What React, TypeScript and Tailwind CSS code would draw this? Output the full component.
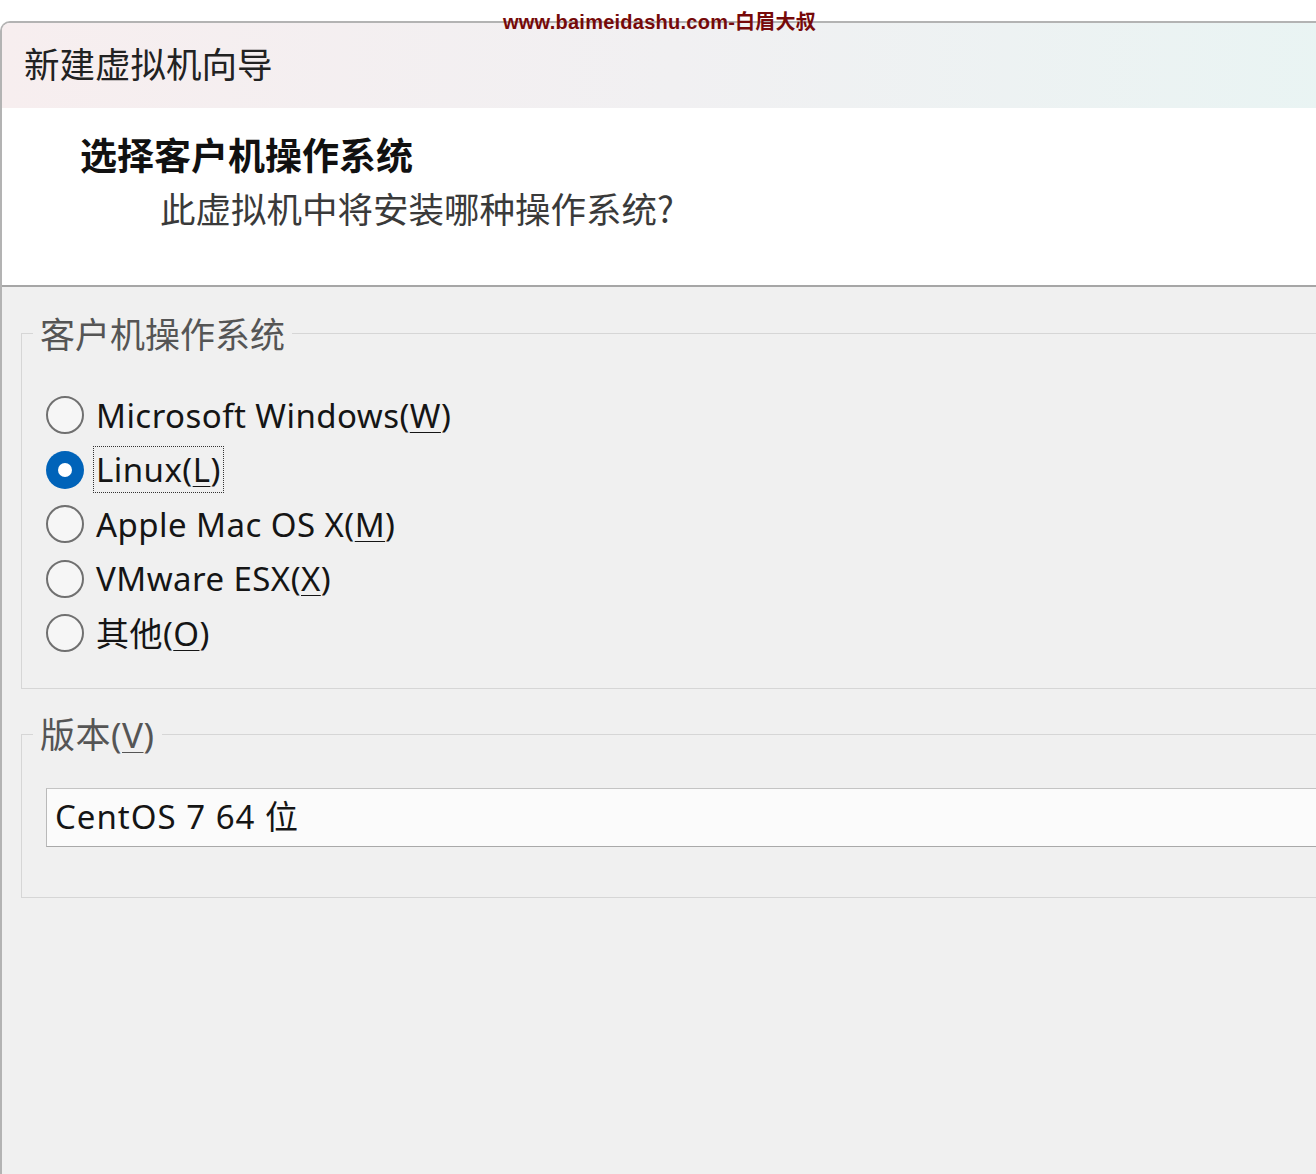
import React from "react";

type Opt = { pre: string; key: string; post: string; selected?: boolean };

const options: Opt[] = [
  { pre: "Microsoft Windows(", key: "W", post: ")" },
  { pre: "Linux(", key: "L", post: ")", selected: true },
  { pre: "Apple Mac OS X(", key: "M", post: ")" },
  { pre: "VMware ESX(", key: "X", post: ")" },
  { pre: "其他(", key: "O", post: ")" },
];

function Radio({ selected }: { selected?: boolean }) {
  if (selected) {
    return (
      <span className="flex h-[38px] w-[38px] shrink-0 items-center justify-center rounded-full bg-[#0063b9]">
        <span className="h-[14px] w-[14px] rounded-full bg-white" />
      </span>
    );
  }
  return (
    <span className="h-[38px] w-[38px] shrink-0 rounded-full border-2 border-[#707070] bg-[#f6f6f6]" />
  );
}

export default function App() {
  return (
    <div className="relative h-[1174px] w-[1316px] overflow-hidden bg-white font-['Noto_Sans','Noto_Sans_CJK_SC',sans-serif]">
      <div className="absolute left-[503px] top-[9px] z-10 whitespace-nowrap font-['Liberation_Sans','Noto_Sans_CJK_SC',sans-serif] text-[20px] font-bold leading-[26px] tracking-[0.25px] text-[#760909]">
        www.baimeidashu.com-白眉大叔
      </div>
      <div className="h-full pt-[21px]">
        <div className="flex h-full w-[1340px] flex-col overflow-hidden rounded-tl-[10px] border-l-2 border-t-2 border-[#b3b3b3]">
          <div className="flex h-[85px] shrink-0 items-center bg-gradient-to-r from-[#f7eeef] via-[#f1f0f2] to-[#e9f4f3] pb-[6px] pl-[22px] font-['Noto_Sans_CJK_SC',sans-serif] text-[35.5px] leading-none text-[#222]">
            新建虚拟机向导
          </div>
          <div className="h-[179px] shrink-0 border-b-2 border-[#a6a6a6] bg-white pt-[28px] font-['Noto_Sans_CJK_SC',sans-serif]">
            <div className="pl-[78px] text-[37px] font-bold leading-none text-[#111]">
              选择客户机操作系统
            </div>
            <div className="mt-[17px] pl-[158px] text-[35.5px] leading-none text-[#3a3a3a]">
              此虚拟机中将安装哪种操作系统?
            </div>
          </div>
          <div className="flex-1 bg-[#f0f0f0] pl-[19px]">
            <fieldset className="mt-[26px] border border-[#d6d6d6]">
              <legend className="ml-[11px] px-[7px] font-['Noto_Sans_CJK_SC',sans-serif] text-[35px] leading-[40px] text-[#555]">
                客户机操作系统
              </legend>
              <div className="flex flex-col pb-[27px] pl-[24px] pt-[35px]">
                {options.map((o) => (
                  <div key={o.key} className="flex h-[54.5px] items-center">
                    <Radio selected={o.selected} />
                    <span
                      className={
                        "ml-[9px] whitespace-nowrap border px-[2px] text-[33px] leading-[45px] tracking-[0.45px] text-[#151515] " +
                        (o.selected ? "border-dotted border-[#333]" : "border-transparent")
                      }
                    >
                      {o.pre}
                      <span className="underline decoration-1 underline-offset-[4px]">{o.key}</span>
                      {o.post}
                    </span>
                  </div>
                ))}
              </div>
            </fieldset>
            <fieldset className="mt-[26px] border border-[#d6d6d6]">
              <legend className="ml-[11px] px-[7px] text-[35px] leading-[40px] tracking-[0.5px] text-[#555]">
                版本(<span className="underline decoration-1 underline-offset-[4px]">V</span>)
              </legend>
              <div className="pb-[50px] pl-[24px] pt-[33px]">
                <div className="flex h-[59px] items-center border border-[#b9b9b9] border-t-[#c4c4c4] border-b-[#a9a9a9] bg-[#fbfbfb] pl-[8px] text-[33px] tracking-[1px] text-[#151515]">
                  CentOS 7 64 位
                </div>
              </div>
            </fieldset>
          </div>
        </div>
      </div>
    </div>
  );
}
